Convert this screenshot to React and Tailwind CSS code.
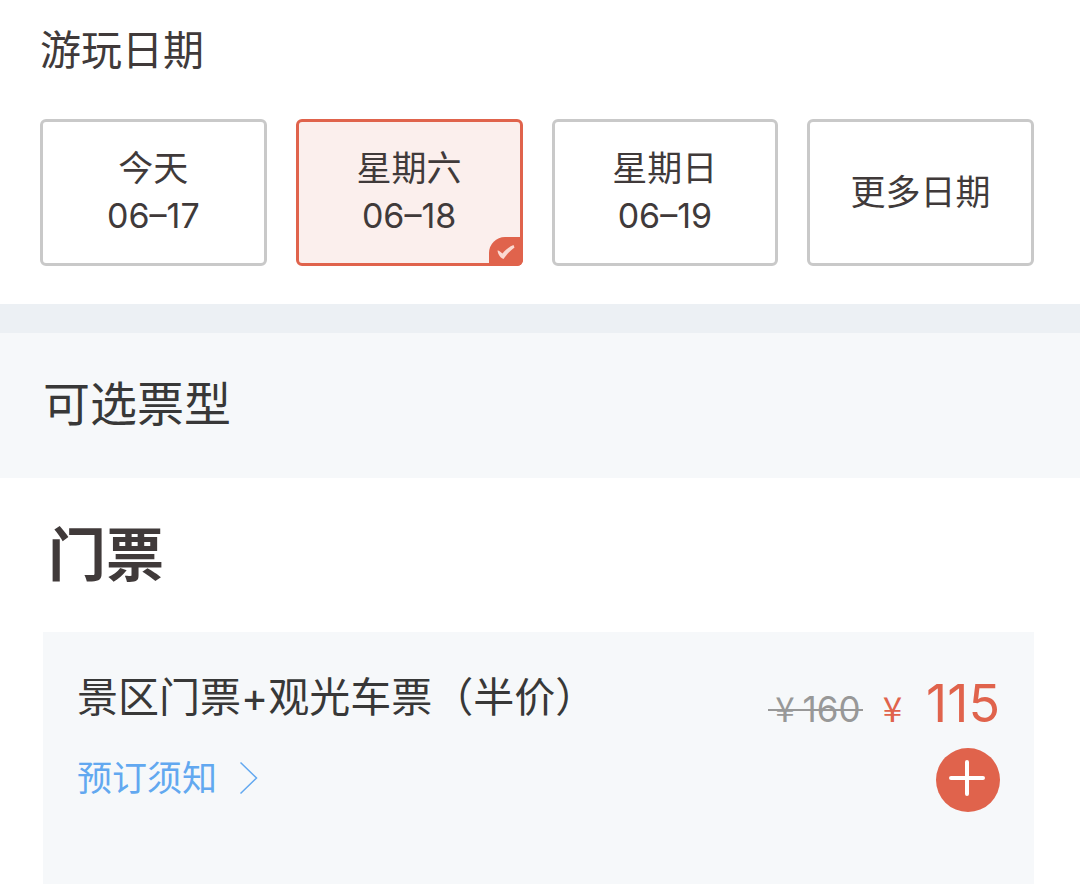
import { useState } from "react";

const dates = [
  { label: "今天", day: "06–17" },
  { label: "星期六", day: "06–18" },
  { label: "星期日", day: "06–19" },
];

function SelectedMark() {
  return (
    <span className="absolute -right-[3px] -bottom-[3px] flex h-[29px] w-[34px] items-center justify-center rounded-tl-[16px] rounded-br-[6px] bg-[#e0634c]">
      <svg className="h-4 w-5" viewBox="0 0 20 16" fill="none" aria-hidden="true">
        <path d="M1.5 6.5 C2.5 6 4.5 7.5 6.5 9.5 C9.5 6 13.5 2.5 17.5 1 L18.5 3.5 C14.5 6.5 10.5 10.5 7.5 15 C4.5 14 2 10.5 1.5 6.5Z" fill="#fbd9d1" />
      </svg>
    </span>
  );
}

function DateButton({ selected, onClick, children }) {
  return (
    <button
      type="button"
      aria-pressed={selected}
      onClick={onClick}
      className={
        "relative flex h-[147px] flex-col items-center justify-center rounded-[6px] border-3 pb-[2px] text-[35px] leading-[48px] text-[#403a3a] " +
        (selected ? "border-[#e0634c] bg-[#fbefed]" : "border-[#c9c9c9] bg-white")
      }
    >
      {children}
      {selected && <SelectedMark />}
    </button>
  );
}

export default function App() {
  const [active, setActive] = useState(1);

  return (
    <main className="bg-white pb-3 font-['Inter','Noto_Sans_CJK_SC',sans-serif] text-[#403a3a]">
      <section className="pt-5 pr-[46px] pb-[38px] pl-10">
        <h2 className="text-[41px] leading-[60px]">游玩日期</h2>
        <div className="mt-[39px] grid grid-cols-4 gap-[29px]">
          {dates.map((d, i) => (
            <DateButton key={d.day} selected={active === i} onClick={() => setActive(i)}>
              <span>{d.label}</span>
              <span className="text-[34px]">{d.day}</span>
            </DateButton>
          ))}
          <DateButton selected={active === 3} onClick={() => setActive(3)}>
            <span>更多日期</span>
          </DateButton>
        </div>
      </section>

      <div className="h-[29px] bg-[#ecf0f4]" />

      <section className="bg-[#f6f8fa] px-[43px] pt-[34px] pb-[38px] text-[#383838]">
        <h2 className="text-[47px] leading-[73px]">可选票型</h2>
      </section>

      <section className="pt-9 pr-[46px] pl-[43px]">
        <h3 className="pl-[5px] text-[58px] leading-[82px] font-bold">门票</h3>
        <article className="mt-9 flex h-[252px] items-start justify-between bg-[#f6f8fa] pr-[34px] pl-[34px]">
          <div className="pt-[35px]">
            <h4 className="text-[41px] leading-[60px] whitespace-nowrap text-[#383838]">景区门票+观光车票（半价）</h4>
            <a href="#notice" className="mt-[25px] flex items-center gap-[22px] text-[35px] leading-[52px] text-[#62a8f0]">
              预订须知
              <svg className="h-[34px] w-5" viewBox="0 0 20 34" fill="none" stroke="currentColor" strokeWidth="1.5" aria-hidden="true">
                <path d="M1.5 1.5 17.5 17 1.5 32.5" />
              </svg>
            </a>
          </div>
          <div className="flex flex-col items-end pt-[42px]">
            <p className="flex h-[60px] items-baseline leading-[60px] whitespace-nowrap">
              <del className="relative flex items-baseline gap-2 pr-[2px] pl-[7px] text-[35px] text-[#989898] no-underline after:absolute after:inset-x-0 after:top-[32px] after:h-[2px] after:bg-[#989898]">
                <span className="font-['Noto_Sans_CJK_SC',sans-serif]">¥</span>
                <span>160</span>
              </del>
              <span className="ml-5 font-['Noto_Sans_CJK_SC',sans-serif] text-[35px] text-[#e0634c]">¥</span>
              <strong className="ml-6 text-[52px] font-normal text-[#e0634c]">115</strong>
            </p>
            <button type="button" aria-label="添加" className="mt-[14px] h-16 w-16 rounded-full bg-[#e0634c]">
              <svg className="h-16 w-16" viewBox="0 0 64 64" fill="none" stroke="white" strokeWidth="4" strokeLinecap="round" aria-hidden="true">
                <path d="M15 30H47M31 14V46" />
              </svg>
            </button>
          </div>
        </article>
      </section>
    </main>
  );
}
